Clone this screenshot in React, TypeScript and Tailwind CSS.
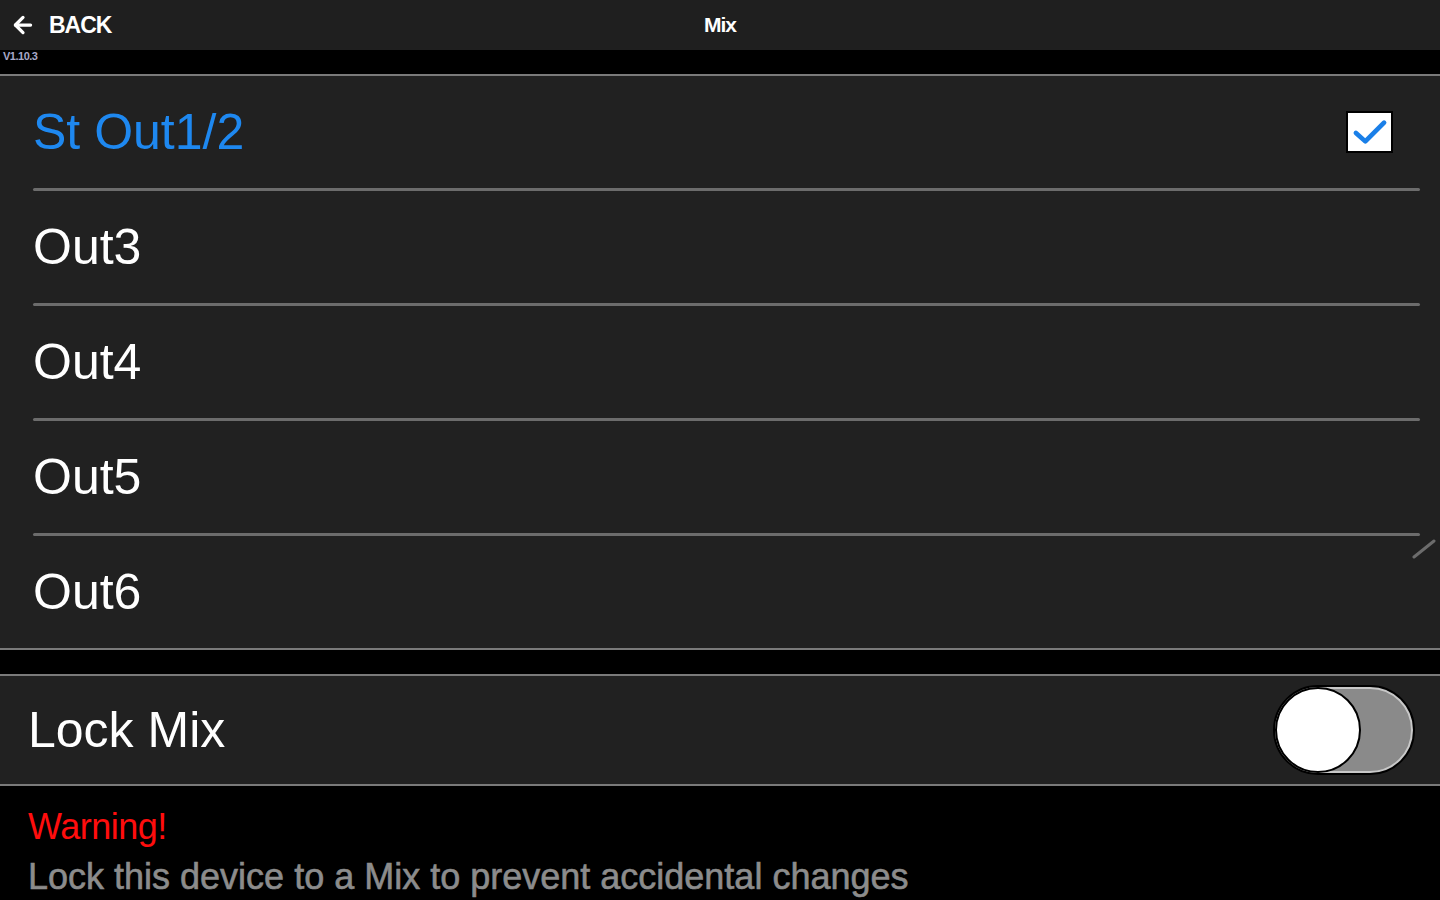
import { ArrowLeft } from "lucide-react";

const outputs = ["St Out1/2", "Out3", "Out4", "Out5", "Out6"];
const selected = "St Out1/2";

function Checkbox() {
  return (
    <div className="flex h-[42px] w-[47px] items-center justify-center border-2 border-black bg-white">
      <svg viewBox="0 0 40 32" className="h-[30px] w-[38px]">
        <path d="M5 17 L15 26 L35 6" fill="none" stroke="#1a7fe8" strokeWidth="5" strokeLinecap="round" strokeLinejoin="round" />
      </svg>
    </div>
  );
}

function Toggle() {
  return (
    <div className="relative h-[90px] w-[142px] rounded-full border-2 border-black bg-black">
      <div className="absolute inset-0 rounded-full border-2 border-[#c8c8c8] bg-[#8a8a8a]" />
      <div className="absolute left-0 top-0 h-[86px] w-[86px] rounded-full border-2 border-black bg-white" />
    </div>
  );
}

export default function App() {
  return (
    <div className="flex h-[900px] w-[1440px] flex-col overflow-hidden bg-black font-['Liberation_Sans',Arial,sans-serif]">
      <header className="relative flex h-[50px] shrink-0 items-center bg-[#1f1f1f]">
        <div className="flex items-center pl-[10px]">
          <ArrowLeft size={26} strokeWidth={3} className="text-white" />
          <span className="ml-[13px] text-[23px] font-bold tracking-[-1px] text-white">BACK</span>
        </div>
        <div className="absolute left-1/2 -translate-x-1/2 text-[21px] font-bold tracking-[-1px] text-white">Mix</div>
      </header>

      <div className="h-[24px] shrink-0 bg-black pl-[3px] text-[11px] font-bold leading-[12px] tracking-[-0.5px] text-[#a8a8c8]">V1.10.3</div>

      <section className="shrink-0 border-y-2 border-[#7a7a7a] bg-[#212121]">
        {outputs.map((name, i) => (
          <div key={name} className="relative pl-[33px] pr-[20px]">
            <div className="flex h-[112px] items-center justify-between">
              <span className={`text-[50px] leading-none ${name === selected ? "text-[#1e88f0]" : "text-white"}`}>{name}</span>
              {name === selected && (
                <div className="mr-[27px]">
                  <Checkbox />
                </div>
              )}
            </div>
            {i < outputs.length - 1 && <div className="h-[3px] rounded bg-[#6c6c6c]" />}
            {i === 3 && (
              <svg viewBox="0 0 24 24" className="absolute right-[4px] top-[114px] h-[24px] w-[24px]">
                <path d="M2 22 L22 6" stroke="#6c6c6c" strokeWidth="3" strokeLinecap="round" />
              </svg>
            )}
          </div>
        ))}
      </section>

      <div className="h-[24px] shrink-0 bg-black" />

      <section className="flex h-[112px] shrink-0 items-center justify-between border-y-2 border-[#7a7a7a] bg-[#212121] pl-[28px] pr-[25px]">
        <span className="text-[50px] leading-none text-white">Lock Mix</span>
        <Toggle />
      </section>

      <section className="flex-1 bg-black pl-[28px] pt-[17px]">
        <div className="text-[36px] leading-[48px] tracking-[-0.5px] text-[#ff0d0d]">Warning!</div>
        <div className="text-[36px] leading-[52px] text-[#8c8c8c] [-webkit-text-stroke:0.6px_#8c8c8c]">Lock this device to a Mix to prevent accidental changes</div>
      </section>
    </div>
  );
}
